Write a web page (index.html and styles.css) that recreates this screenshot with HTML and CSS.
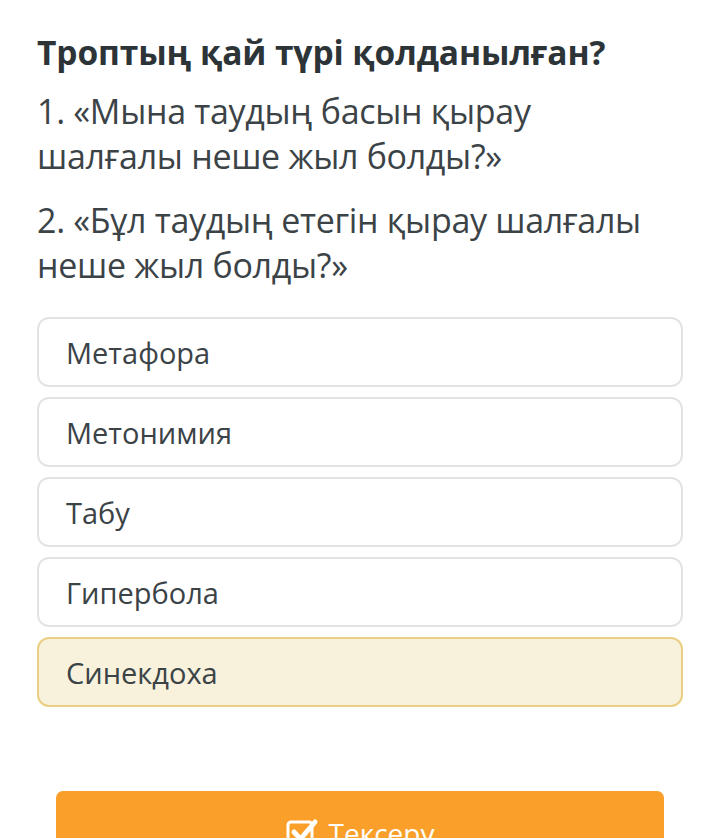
FILE: index.html
```html
<!DOCTYPE html>
<html lang="kk">
<head>
<meta charset="utf-8">
<link rel="stylesheet" href="styles.css">
</head>
<body>
<main class="quiz">
  <h1 class="title">Троптың қай түрі қолданылған?</h1>
  <p class="line line-first">1. «Мына таудың басын қырау шалғалы неше жыл болды?»</p>
  <p class="line">2. «Бұл таудың етегін қырау шалғалы неше жыл болды?»</p>
  <div class="options">
    <div class="option">Метафора</div>
    <div class="option">Метонимия</div>
    <div class="option">Табу</div>
    <div class="option">Гипербола</div>
    <div class="option selected">Синекдоха</div>
  </div>
  <button class="check">
    <svg class="icon" width="33" height="31" viewBox="0 0 33 31">
      <rect x="2" y="5" width="24" height="24" rx="3" fill="none" stroke="#fff" stroke-width="3"/>
      <path d="M8 15 L14.5 22 L29 5" fill="none" stroke="#fff" stroke-width="5" stroke-linecap="round" stroke-linejoin="round"/>
    </svg>
    <span>Тексеру</span>
  </button>
</main>
</body>
</html>
```
FILE: styles.css
```css
html, body {
  margin: 0;
  padding: 0;
  background: #fff;
}
body {
  font-family: "Open Sans", "Noto Sans", sans-serif;
  color: #3b4347;
}
.quiz {
  padding: 29px 37px 0 37px;
  display: flex;
  flex-direction: column;
}
.title {
  margin: 0;
  font-size: 33.5px;
  font-weight: 700;
  line-height: 46px;
  color: #2d3438;
  letter-spacing: -0.1px;
}
.line {
  margin: 19px 0 0 0;
  width: 620px;
  font-size: 34px;
  line-height: 45px;
  font-weight: 400;
  letter-spacing: -0.3px;
}
.line-first {
  margin-top: 14px;
}
.options {
  margin-top: 29px;
  display: flex;
  flex-direction: column;
  gap: 10px;
  width: 646px;
}
.option {
  height: 66px;
  border: 2px solid #e1e4e5;
  border-radius: 12px;
  padding: 0 27px;
  display: flex;
  align-items: center;
  font-size: 29px;
  color: #3b4347;
  background: #fff;
}
.option.selected {
  background: #f8f2dc;
  border-color: #eacf82;
}
.check {
  margin: 84px 0 0 19px;
  width: 608px;
  height: 70px;
  border: none;
  border-radius: 7px;
  background: #fa9f2a;
  color: #fff;
  font-family: "Open Sans", "Noto Sans", sans-serif;
  font-size: 28px;
  display: flex;
  align-items: center;
  justify-content: center;
  gap: 10px;
  padding: 13px 0 0 0;
}
.icon {
  display: block;
}
```
